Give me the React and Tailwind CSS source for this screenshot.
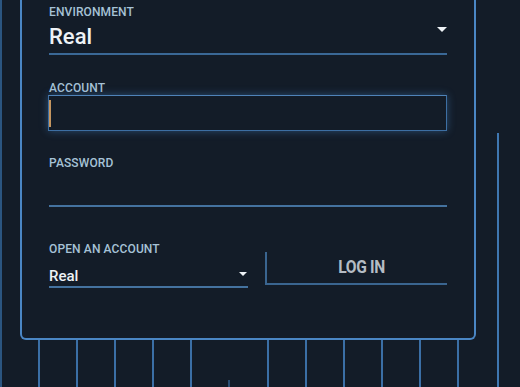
import React from "react";

const Label = ({ children, className = "" }) => (
  <div
    className={
      "text-[12px] leading-[14px] font-medium tracking-[0.01em] text-[#a6c2d6] " +
      className
    }
  >
    {children}
  </div>
);

const Caret = ({ className = "" }) => (
  <div
    className={
      "w-0 h-0 border-l-transparent border-r-transparent border-t-[#eef2f6] " +
      className
    }
  />
);

const bottomLines = [0, 1, 2, 3, 4, 5, 6, 7, 8, 9, 10, 11];

export default function App() {
  return (
    <div
      className="flex w-[520px] h-[387px] overflow-hidden bg-[#131c28]"
      style={{ fontFamily: "Roboto, 'Liberation Sans', sans-serif" }}
    >
      {/* left trace */}
      <div className="w-[2px] h-full bg-[#2b5580] shrink-0" />

      <div className="ml-[18px] w-[456px] shrink-0 flex flex-col">
        {/* card */}
        <div className="h-[340px] border-x-2 border-b-2 border-[#4a86c4] rounded-b-[6px] pl-[27px] pr-[27px] flex flex-col">
          <Label className="mt-[5px]">ENVIRONMENT</Label>
          <div className="mt-[5px] h-[31px] border-b-2 border-[#3a6896] flex justify-between items-start">
            <span className="text-[22px] leading-[26px] font-medium text-[#eef2f6]">Real</span>
            <Caret className="mt-[3px] border-l-[5px] border-r-[5px] border-t-[5px]" />
          </div>

          <Label className="mt-[26px]">ACCOUNT</Label>
          <div className="h-[36px] -ml-[1px] border border-[#3d6fa3] border-t-[#4f83b8] shadow-[0_0_8px_rgba(70,135,205,0.45)] flex items-start">
            <div className="mt-[4px] w-[2px] h-[27px] bg-[#c59660]" />
          </div>

          <Label className="mt-[25px]">PASSWORD</Label>
          <div className="h-[37px] border-b-2 border-[#44729f]" />

          <div className="flex gap-[17px]">
            <div className="w-[199px] flex flex-col">
              <Label className="mt-[35px]">OPEN AN ACCOUNT</Label>
              <div className="mt-[11px] h-[21px] border-b-2 border-[#44729f] flex justify-between items-start">
                <span className="text-[15px] leading-[18px] font-medium text-[#eef2f6]">Real</span>
                <Caret className="mt-[5px] mr-[1px] border-l-[4px] border-r-[4px] border-t-[4px]" />
              </div>
            </div>
            <div className="flex-1 flex flex-col">
              <button className="mt-[45px] h-[33px] pl-[10px] border-l-2 border-b-2 border-[#3a6590] flex items-center justify-center text-[#b5bcc4]">
                <span className="inline-block text-[19px] font-bold tracking-[-0.02em] scale-x-[0.82]">
                  LOG IN
                </span>
              </button>
            </div>
          </div>
        </div>

        {/* traces below card */}
        <div className="flex-1 flex items-start pl-[18px] gap-[36.1px]">
          {bottomLines.map((i) => (
            <div
              key={i}
              className={
                i === 5
                  ? "w-[2px] h-full bg-[#3b6fa6] mt-[40px] opacity-60"
                  : "w-[2px] h-full bg-[#3b6fa6]"
              }
            />
          ))}
        </div>
      </div>

      {/* right trace */}
      <div className="ml-[21px] mt-[133px] w-[2px] h-full bg-[#3f77b1] shrink-0" />
    </div>
  );
}
